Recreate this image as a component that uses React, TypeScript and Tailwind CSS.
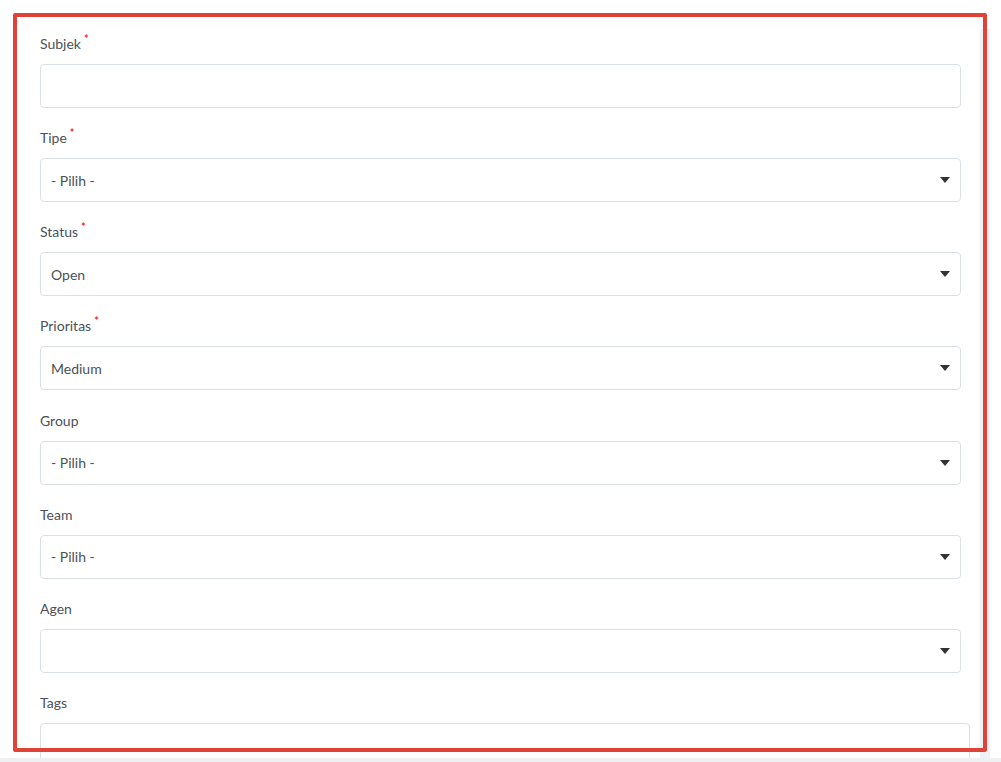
import React from 'react';

type Field = {
  label: string;
  required?: boolean;
  kind: 'text' | 'select';
  value?: string;
};

const fields: Field[] = [
  { label: 'Subjek', required: true, kind: 'text' },
  { label: 'Tipe', required: true, kind: 'select', value: '- Pilih -' },
  { label: 'Status', required: true, kind: 'select', value: 'Open' },
  { label: 'Prioritas', required: true, kind: 'select', value: 'Medium' },
  { label: 'Group', kind: 'select', value: '- Pilih -' },
  { label: 'Team', kind: 'select', value: '- Pilih -' },
  { label: 'Agen', kind: 'select', value: '' },
];

const Caret = () => (
  <svg width="10" height="6" viewBox="0 0 10 6" className="shrink-0">
    <path d="M0 0 H10 L5 6 Z" fill="#2f3337" />
  </svg>
);

const FormRow = ({ field }: { field: Field }) => (
  <div className="mb-[19.15px]">
    <label className="flex h-[21px] items-center text-[14px] leading-[21px] text-[#4b5157]">
      {field.label}
      {field.required && (
        <span className="ml-[3px] -mt-[10px] text-[11px] font-bold leading-none text-[#e3342f]">*</span>
      )}
    </label>
    <div className="mt-[10px] flex h-[44px] w-[921px] items-center justify-between rounded-[4px] border border-[#dbe0e5] bg-white pl-[10px] pr-[10px]">
      <span className="text-[14px] text-[#4b5157]">{field.value}</span>
      {field.kind === 'select' && <Caret />}
    </div>
  </div>
);

export default function App() {
  return (
    <div
      className="relative h-[762px] w-[1001px] overflow-hidden bg-white"
      style={{ fontFamily: 'Lato, "Open Sans", sans-serif' }}
    >
      {/* page scroll track */}
      <div className="absolute left-[980px] top-[29px] h-[733px] w-[10px] bg-[#eef2f6]" />

      <div className="pl-[40px] pt-[33px]">
        {fields.map((f) => (
          <FormRow key={f.label} field={f} />
        ))}

        {/* Tags */}
        <div>
          <label className="flex h-[21px] items-center text-[14px] leading-[21px] text-[#4b5157]">
            Tags
          </label>
          <div className="mt-[10px] h-[60px] w-[930px] rounded-[4px] border border-[#dbe0e5] bg-white" />
        </div>
      </div>

      {/* bottom bar */}
      <div className="absolute bottom-0 left-0 h-[4px] w-full bg-[#eff0f1]" />

      {/* highlight box */}
      <div className="pointer-events-none absolute left-[13px] top-[13px] h-[739px] w-[974px] rounded-[2px] border-[4px] border-[#df4338]" />
    </div>
  );
}
